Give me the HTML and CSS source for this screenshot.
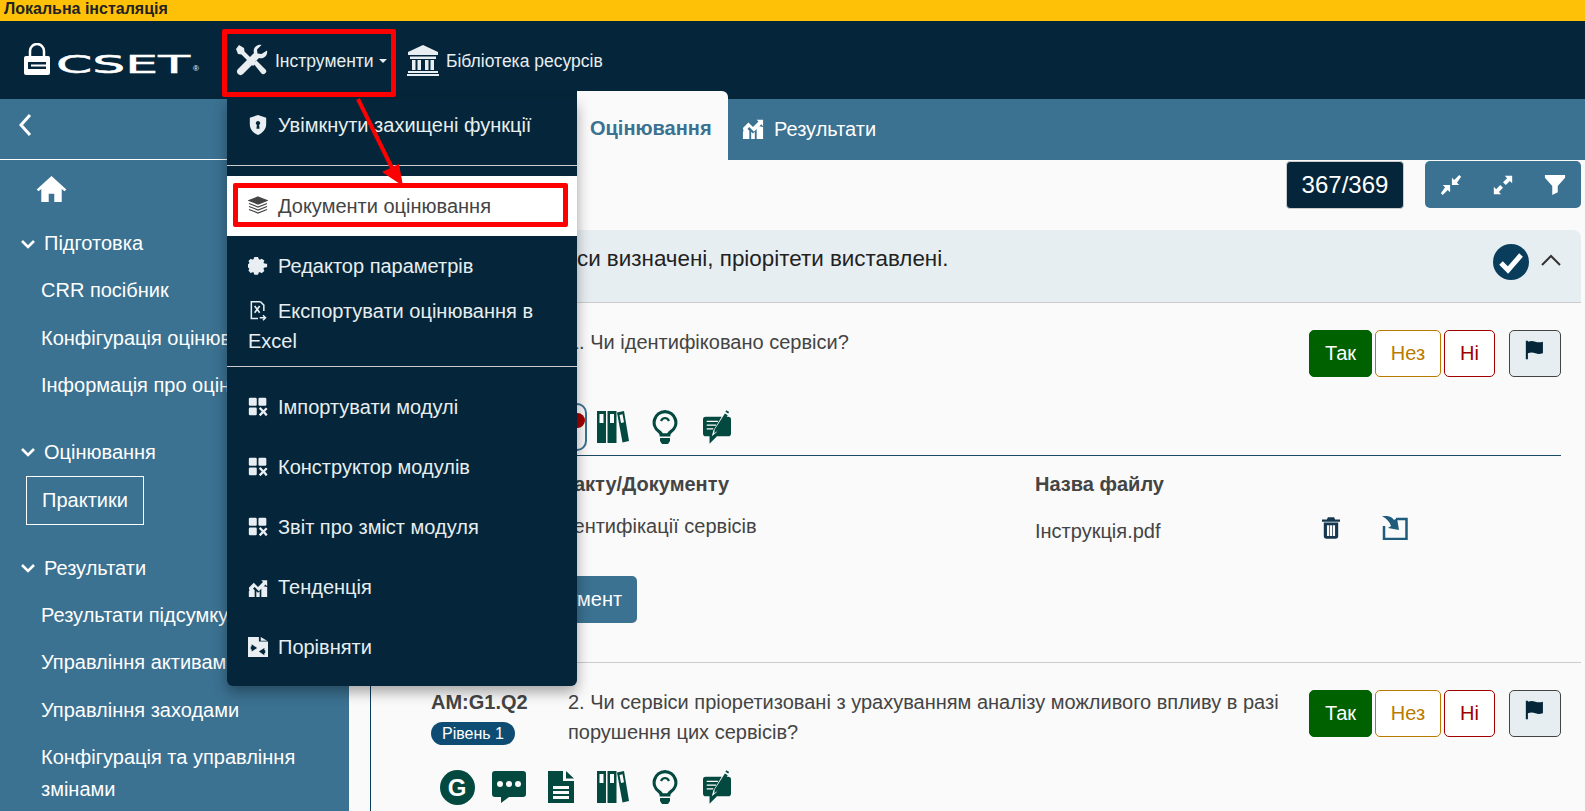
FILE: index.html
```html
<!DOCTYPE html>
<html lang="uk">

<head>
	<meta charset="utf-8">
	<title>CSET</title>
	<link rel="stylesheet" href="styles.css">
</head>

<body>
	<svg class="defs" aria-hidden="true">
		<symbol id="i-modules" viewBox="0 0 24 24">
			<rect x="1" y="1" width="9.5" height="9.5" rx="1.5" />
			<rect x="12.5" y="1" width="9.5" height="9.5" rx="1.5" />
			<rect x="1" y="12.5" width="9.5" height="9.5" rx="1.500" />
			<path d="M13 14l2-2 3.500 3.500 3-3 2 2-3 3 3 3.500-2 2-3-3.500-3.500 3.500-2-2 3.500-3.500z" />
		</symbol>
		<symbol id="i-comment" viewBox="0 0 34 32">
			<path fill-rule="evenodd" d="M3 0h28a3 3 0 0 1 3 3v20a3 3 0 0 1-3 3H17l-8 6v-6H3a3 3 0 0 1-3-3V3a3 3 0 0 1 3-3zM8 10a3 3 0 1 0 0 6 3 3 0 0 0 0-6zm9 0a3 3 0 1 0 0 6 3 3 0 0 0 0-6zm9 0a3 3 0 1 0 0 6 3 3 0 0 0 0-6z" />
		</symbol>
		<symbol id="i-file" viewBox="0 0 26 32">
			<path fill-rule="evenodd" d="M0 0h15v10h11v22H0zM18 0l8 7.500h-8zM5 15v3h16v-3zM5 20v3h16v-3zM5 25v3h16v-3z" />
		</symbol>
		<symbol id="i-books" viewBox="0 0 32 32">
			<path fill-rule="evenodd" d="M0 0h9v32H0zM2.500 3v9h4V3zM10.500 0h9v32h-9zM13 3v9h4V3z" />
			<path fill-rule="evenodd" d="M20 1.500l7-1.500L32 30l-6.500 1.500zM22.500 4l1.500 8 3-.7-1.500-8z" />
		</symbol>
		<symbol id="i-bulb" viewBox="0 0 26 34">
			<path fill-rule="evenodd" d="M13 0a12.500 12.500 0 0 1 7 22.800c-1.200 1-1.700 2-1.700 3.700H7.700c0-1.700-.5-2.700-1.700-3.700A12.500 12.500 0 0 1 13 0zm0 3.200a9.300 9.300 0 0 0-5 17.100c1.400 1 2.300 2 2.800 3h4.400c.5-1 1.400-2 2.800-3a9.300 9.300 0 0 0-5-17.100z" />
			<path d="M8 28h10v3l-2 3h-6l-2-3zM8 10.500c1-2.500 3-3.500 5-3.500s4 1 5 3.500l-2 1c-.7-1.600-1.800-2.200-3-2.200s-2.300.6-3 2.200z" />
		</symbol>
		<symbol id="i-pen" viewBox="0 0 30 36">
			<path d="M3 7h17l-9 15-1.500 6 5-4.500L23 7h4a3 3 0 0 1 3 3v15a3 3 0 0 1-3 3H15l-8 8v-8H3a3 3 0 0 1-3-3V10a3 3 0 0 1 3-3z" />
			<path d="M25 0l3 1.800-1 1.700-3-1.800zM23.500 3.500l3 1.800-11 17-3.500 2.500.5-4z" />
			<path class="pen-lines" d="M4 12h12M4 16h10M4 20h7" />
		</symbol>
	</svg>

	<div class="banner">Локальна інсталяція</div>

	<header class="topbar">
		<div class="logo">
			<svg class="logo-lock" viewBox="0 0 26 32">
				<path d="M6 14V8a7 7 0 0 1 14 0v6" fill="none" stroke="#fff" stroke-width="2.500" />
				<path fill="#fff" fill-rule="evenodd" d="M2 13h22a2 2 0 0 1 2 2v15a2 2 0 0 1-2 2H2a2 2 0 0 1-2-2V15a2 2 0 0 1 2-2zm2 6v7h18v-2.500H7v-2h15V19z" />
			</svg>
			<span class="logo-text">CSET</span>
			<span class="logo-reg">®</span>
		</div>
		<a class="nav-link nav-tools">
			<svg class="nav-icon" viewBox="0 0 32 32" fill="#e8eef1">
				<path d="M3 1l5 3 .5 3.500L20 19l-3 3L5.500 10.500 2 10 0 5z" />
				<path d="M17.500 19.500l3-3 9 9c1 1 1 2.500 0 3.500l-.5.500c-1 1-2.500 1-3.500 0z" />
				<path d="M31 6.500c.8 3-1 6.500-4 7.500-1.500.5-3 .3-4 0L7 30c-1.500 1.500-3.500 1.500-5 0s-1.500-3.500 0-5L18 9c-.3-1-.5-2.500 0-4 1-3 4.500-4.800 7.500-4l-4.500 4.500.5 4 4 .5z" />
			</svg>
			Інструменти <i class="caret"></i>
		</a>
		<a class="nav-link">
			<svg class="nav-icon" viewBox="0 0 32 32" fill="#e8eef1">
				<path d="M16 1L31 8v3H1V8zM3 12.500h26V15H3zM1 27h30v2H1zM0 30h32v2H0zM5 16h3.500v10H5zM10.500 16H14v10h-3.500zM18 16h3.500v10H18zM23.500 16H27v10h-3.500z" />
			</svg>
			Бібліотека ресурсів
		</a>
	</header>

	<div class="layout">
		<nav class="sidebar">
			<div class="side-top">
				<svg class="back" viewBox="0 0 14 24" fill="none" stroke="#fff" stroke-width="3">
					<path d="M12 2L3 12l9 10" />
				</svg>
			</div>
			<div class="side-home">
				<svg viewBox="0 0 32 28" fill="#fff">
					<path d="M16 0l16 14.500-2 2L27 14v14h-8v-9h-6v9H5V14l-3 2.500-2-2z" />
				</svg>
			</div>
			<div class="side-head"><svg class="chev" viewBox="0 0 16 10"><path d="M2 2l6 6 6-6" /></svg>Підготовка</div>
			<div class="side-item">CRR посібник</div>
			<div class="side-item">Конфігурація оцінювання</div>
			<div class="side-item">Інформація про оцінювання</div>
			<div class="side-head gap"><svg class="chev" viewBox="0 0 16 10"><path d="M2 2l6 6 6-6" /></svg>Оцінювання</div>
			<div class="side-active">Практики</div>
			<div class="side-head gap"><svg class="chev" viewBox="0 0 16 10"><path d="M2 2l6 6 6-6" /></svg>Результати</div>
			<div class="side-item">Результати підсумку</div>
			<div class="side-item">Управління активами</div>
			<div class="side-item">Управління заходами</div>
			<div class="side-item wrap">Конфігурація та управління змінами</div>
		</nav>

		<main class="main">
			<div class="tabs">
				<div class="tab active">Оцінювання</div>
				<div class="tab">
					<svg class="tab-icon" viewBox="0 0 24 24" fill="#fff">
						<path d="M1 16l4-4 3 3v9H1zM10 16l2 2 2-2v8h-4zM16 13l3-3 4 1v13h-7zM1 12l6-6 5 5 6-6-2-2h7v7l-2-2-8 8-5-5-6 6z" />
					</svg>
					Результати
				</div>
			</div>

			<div class="toolbar">
				<div class="counter">367/369</div>
				<div class="tool-group">
					<span class="tool-btn">
						<svg viewBox="0 0 24 24" fill="#fff"><path d="M23 3l-2-2-5.500 5.500L13 4v8h8l-2.500-2.500zM1 21l2 2 5.500-5.500L11 20v-8H3l2.500 2.500z" /></svg>
					</span>
					<span class="tool-btn">
						<svg viewBox="0 0 24 24" fill="#fff"><path d="M14 2h8v8l-2.500-2.500L15 12l-3-3 4.500-4.500zM10 22H2v-8l2.500 2.500L9 12l3 3-4.500 4.500z" /></svg>
					</span>
					<span class="tool-btn">
						<svg viewBox="0 0 24 24" fill="#fff"><path d="M1 1h22v3l-8 9v7l-6 3V13L1 4z" /></svg>
					</span>
				</div>
			</div>

			<section class="group">
				<div class="group-head">
					<div class="group-title">Сервіси визначені, пріорітети виставлені.</div>
					<svg class="check" viewBox="0 0 36 36">
						<circle cx="18" cy="18" r="18" fill="#0a3d5c" />
						<path d="M8 19l7 7L28 11" fill="none" stroke="#fff" stroke-width="5" />
					</svg>
					<svg class="collapse" viewBox="0 0 22 14" fill="none" stroke="#333" stroke-width="2">
						<path d="M2 12l9-9 9 9" />
					</svg>
				</div>

				<article class="question">
					<div class="q-top">
						<div class="q-id">
							<b>AM:G1.Q1</b>
							<span class="level">Рівень 1</span>
						</div>
						<div class="q-text">1. Чи ідентифіковано сервіси?</div>
						<div class="answers">
							<span class="ans yes">Так</span>
							<span class="ans na">Нез</span>
							<span class="ans no">Ні</span>
							<span class="ans flag">
								<svg viewBox="0 0 24 24"><path fill="#052538" d="M1 1h2.500v1c4-1.500 6-1 9 0s5 1 9 0v14c-4 1-6 1-9 0s-5-1.500-9 0v7H1z" /></svg>
							</span>
						</div>
					</div>
					<div class="q-icons">
						<span class="q-icon"><span class="g">G</span></span>
						<span class="q-icon"><svg class="ic-comment"><use href="#i-comment" /></svg></span>
						<span class="q-icon picked"><svg class="ic-file"><use href="#i-file" /></svg><i class="dot"></i></span>
						<span class="q-icon"><svg class="ic-books"><use href="#i-books" /></svg></span>
						<span class="q-icon"><svg class="ic-bulb"><use href="#i-bulb" /></svg></span>
						<span class="q-icon"><svg class="ic-pen"><use href="#i-pen" /></svg></span>
					</div>
					<div class="docs">
						<div class="docs-row docs-head">
							<b>Назва артефакту/Документу</b>
							<b>Назва файлу</b>
						</div>
						<div class="docs-row">
							<span class="doc-name">Інструкція з ідентифікації сервісів</span>
							<span class="file-name">Інструкція.pdf</span>
							<svg class="trash" viewBox="0 0 20 24" fill="#15384f">
								<path fill-rule="evenodd" d="M6.500 0h7l1 2.500H20v2.500H0V2.500h5.500zM2 6h16v15a3 3 0 0 1-3 3H5a3 3 0 0 1-3-3zM5.500 9v12H8V9zm3.300 0v12h2.500V9zm3.300 0v12h2.400V9z" />
							</svg>
							<svg class="export" viewBox="0 0 26 24">
								<path d="M14 3h10.500v20H2V10" fill="none" stroke="#1f5c7c" stroke-width="2.500" />
								<path fill="#1f5c7c" d="M0 0c6-.5 10 .5 12 4l3-2 2 12-11-2 3-2C8 6 5 3 0 0z" />
							</svg>
						</div>
						<div class="add-doc">Додати документ</div>
					</div>
				</article>

				<article class="question second">
					<div class="q-top">
						<div class="q-id">
							<b>AM:G1.Q2</b>
							<span class="level">Рівень 1</span>
						</div>
						<div class="q-text">2. Чи сервіси пріоретизовані з урахуванням аналізу можливого впливу в разі порушення цих сервісів?</div>
						<div class="answers">
							<span class="ans yes">Так</span>
							<span class="ans na">Нез</span>
							<span class="ans no">Ні</span>
							<span class="ans flag">
								<svg viewBox="0 0 24 24"><path fill="#052538" d="M1 1h2.500v1c4-1.500 6-1 9 0s5 1 9 0v14c-4 1-6 1-9 0s-5-1.500-9 0v7H1z" /></svg>
							</span>
						</div>
					</div>
					<div class="q-icons">
						<span class="q-icon"><span class="g">G</span></span>
						<span class="q-icon"><svg class="ic-comment"><use href="#i-comment" /></svg></span>
						<span class="q-icon"><svg class="ic-file"><use href="#i-file" /></svg></span>
						<span class="q-icon"><svg class="ic-books"><use href="#i-books" /></svg></span>
						<span class="q-icon"><svg class="ic-bulb"><use href="#i-bulb" /></svg></span>
						<span class="q-icon"><svg class="ic-pen"><use href="#i-pen" /></svg></span>
					</div>
				</article>
			</section>
		</main>
	</div>

	<div class="menu">
		<div class="menu-item menu-first">
			<svg class="mi" viewBox="0 0 20 22">
				<path fill-rule="evenodd" d="M10 0l9 3v7c0 6-4 10-9 12C5 20 1 16 1 10V3zM10 6.500a2.300 2.300 0 0 0-1.200 4.300L8.300 15h3.400l-.5-4.200A2.300 2.300 0 0 0 10 6.500z" />
			</svg>Увімкнути захищені функції
		</div>
		<hr class="menu-line">
		<div class="menu-item selected">
			<svg class="mi mi-line" viewBox="0 0 20 20" stroke="#444" stroke-width="1.200">
				<path class="mi-solid" d="M10 1l9 3.500-9 3.500-9-3.500z" />
				<path d="M1 7.500l9 3.500 9-3.500M1 10.500l9 3.500 9-3.500M1 13.500l9 3.500 9-3.500" />
			</svg>Документи оцінювання
		</div>
		<div class="menu-item">
			<svg class="mi" viewBox="0 0 22 20">
				<path d="M7 0h4l1 2.500c1 .5 2 .5 3-.5l3 2-1 2.500c1 1 2 1 4 1v4c-2 0-3 0-4 1.500l1 2.500-3 2.500c-1-1-2-1.500-3-1l-1 2.500H7l-1-2.500c-1-.5-2 0-3 1l-2.500-3 1-2c-.5-1-1-1.500-2-1.500V8c1 0 1.500-.5 2-1.500l-1-2L3 2c1 1 2 1 3 .5z" />
			</svg>Редактор параметрів
		</div>
		<div class="menu-item menu-export">
			<svg class="mi mi-line" viewBox="0 0 20 24" stroke="#e8eef1" stroke-width="1.800">
				<path d="M13 1H2v20h8M13 1l4 4v7" />
				<path d="M6 6l6 8M12 6l-6 8" stroke-width="2" />
				<path d="M12 20h7m-3-3l3 3-3 3" />
			</svg>Експортувати оцінювання в Excel
		</div>
		<hr class="menu-line">
		<div class="menu-item"><svg class="mi"><use href="#i-modules" /></svg>Імпортувати модулі</div>
		<div class="menu-item"><svg class="mi"><use href="#i-modules" /></svg>Конструктор модулів</div>
		<div class="menu-item"><svg class="mi"><use href="#i-modules" /></svg>Звіт про зміст модуля</div>
		<div class="menu-item">
			<svg class="mi" viewBox="0 0 24 24">
				<path d="M1 17l4-4 3 3v8H1zM10 17l2 2 2-2v7h-4zM16 14l3-3 4 1v12h-7zM1 13l6-6 5 5 6-6-2-2h7v7l-2-2-8 8-5-5-6 6z" />
			</svg>Тенденція
		</div>
		<div class="menu-item">
			<svg class="mi" viewBox="0 0 22 22">
				<path fill-rule="evenodd" d="M0 0h12v5h10v17H0zM14 0l7 4h-7zM4 8l6 4-6 4v-2.500H3v-3h1zM18 12l-6 4 6 4v-2.500h1v-3h-1z" />
			</svg>Порівняти
		</div>
	</div>

	<div class="mark mark-tools"></div>
	<div class="mark mark-doc"></div>
	<svg class="mark-arrow" viewBox="0 0 60 100">
		<path d="M5 3L42 78" fill="none" stroke="#f00" stroke-width="4" />
		<path d="M50 90L29 76 46 68z" fill="#f00" />
	</svg>
</body>

</html>
```

FILE: styles.css
```css
html,
body {
	margin: 0;
	height: 811px;
	overflow: hidden;
}

body {
	position: relative;
	font-family: "Liberation Sans", Arial, sans-serif;
	font-size: 20px;
	color: #444;
	background: #fafafa;
}

.defs {
	position: absolute;
	width: 0;
	height: 0;
}

.banner {
	height: 21px;
	padding-left: 4px;
	background: #ffc107;
	color: #222;
	font-size: 16px;
	font-weight: bold;
	line-height: 17px;
}

.topbar {
	display: flex;
	align-items: center;
	height: 78px;
	background: #05263a;
	color: #e8eef1;
}

.logo {
	display: flex;
	align-items: flex-end;
	width: 236px;
	height: 32px;
	margin-top: -2px;
	padding-left: 24px;
	box-sizing: border-box;
}

.logo-lock {
	width: 26px;
	height: 32px;
	flex: none;
}

.logo-text {
	display: block;
	margin-left: 6px;
	color: #fff;
	font-family: "DejaVu Sans", sans-serif;
	font-size: 26px;
	line-height: 22px;
	-webkit-text-stroke: .5px #fff;
	transform: scale(2, .98);
	transform-origin: left bottom;
}

.logo-reg {
	margin-left: 70px;
	color: #fff;
	font-size: 8px;
	line-height: 12px;
}

.nav-link {
	display: flex;
	align-items: center;
	gap: 7px;
	padding-top: 2px;
	font-size: 17.500px;
}

.nav-tools {
	width: 171px;
}

.nav-icon {
	width: 32px;
	height: 32px;
	margin-top: -2px;
}

.caret {
	width: 0;
	height: 0;
	margin-left: -2px;
	border: 4px solid transparent;
	border-top-color: #e8eef1;
	border-bottom: 0;
}

.layout {
	display: flex;
	height: 712px;
}

.sidebar {
	width: 349px;
	flex: none;
	background: #3b7191;
	color: #fff;
}

.side-top {
	display: flex;
	align-items: center;
	height: 61px;
	padding: 0 0 8px 18px;
	box-sizing: border-box;
	border-bottom: 1px solid #fff;
}

.back {
	width: 14px;
	height: 24px;
}

.side-home {
	height: 60px;
	padding: 16px 0 0 36px;
	box-sizing: border-box;
}

.side-home svg {
	width: 31px;
	height: 26px;
	display: block;
}

.side-head {
	display: flex;
	align-items: center;
	height: 47px;
	padding-left: 20px;
}

.side-head.gap {
	margin-top: 19px;
}

.chev {
	width: 16px;
	height: 10px;
	margin-right: 8px;
	fill: none;
	stroke: #fff;
	stroke-width: 2.600;
}

.side-item {
	padding-left: 41px;
	line-height: 47.500px;
	white-space: nowrap;
}

.side-item.wrap {
	padding-right: 40px;
	line-height: 32px;
	white-space: normal;
	margin-top: 7px;
}

.side-active {
	width: 116px;
	height: 47px;
	margin: 0 0 20px 26px;
	border: 1px solid #fff;
	line-height: 47px;
	text-align: center;
}

.main {
	flex: 1;
	min-width: 0;
}

.tabs {
	display: flex;
	align-items: flex-end;
	height: 61px;
	padding-left: 228px;
	background: #3b7191;
	color: #fff;
}

.tab {
	display: flex;
	align-items: center;
	gap: 10px;
	height: 61px;
	padding: 0 0 0 14px;
	flex: none;
}

.tab.active {
	width: 151px;
	height: 69px;
	padding: 6px 0 0 13px;
	box-sizing: border-box;
	background: #fafafa;
	border-radius: 0 6px 0 0;
	color: #3b7191;
	font-weight: bold;
}

.tab-icon {
	width: 22px;
	height: 22px;
	margin-top: -4px;
}

.toolbar {
	display: flex;
	justify-content: flex-end;
	gap: 21px;
	height: 70px;
	padding: 1px 4px 0 0;
	box-sizing: border-box;
}

.counter {
	width: 118px;
	height: 48px;
	border: 1px solid #ccc;
	border-radius: 4px;
	box-sizing: border-box;
	background: #05263a;
	color: #fff;
	font-size: 24px;
	line-height: 46px;
	text-align: center;
}

.tool-group {
	display: flex;
	height: 47px;
	background: #3b7191;
	border-radius: 5px;
}

.tool-btn {
	display: flex;
	align-items: center;
	justify-content: center;
	width: 52px;
}

.tool-btn svg {
	width: 22px;
	height: 22px;
}

.group {
	margin: 0 4px 0 21px;
	border-left: 1px solid #0a3d5c;
}

.group-head {
	display: flex;
	align-items: flex-start;
	height: 72px;
	background: #e7eef2;
	border-bottom: 1px solid #ccc;
	border-radius: 0 8px 0 0;
}

.group-title {
	flex: 1;
	padding: 14px 0 0 148px;
	color: #222;
	font-size: 22.400px;
	line-height: 30px;
}

.check {
	width: 36px;
	height: 36px;
	margin: 14px 11px 0 0;
}

.collapse {
	width: 22px;
	height: 14px;
	margin: 23px 19px 0 0;
}

.question {
	padding: 27px 20px 0 60px;
}

.question.second {
	border-top: 1px solid #ccc;
}

.q-top {
	display: flex;
	min-height: 73px;
}

.q-id {
	width: 137px;
	flex: none;
	line-height: 24px;
}

.level {
	display: block;
	width: 84px;
	height: 23px;
	margin-top: 8px;
	background: #0f4c73;
	border-radius: 12px;
	color: #fff;
	font-size: 16px;
	line-height: 23px;
	text-align: center;
}

.q-text {
	flex: 1;
	margin-top: -3px;
	padding-right: 20px;
	line-height: 30px;
}

.answers {
	display: flex;
	gap: 3px;
	flex: none;
	height: 47px;
}

.ans {
	display: flex;
	align-items: center;
	justify-content: center;
	height: 47px;
	border: 1px solid;
	border-radius: 5px;
	box-sizing: border-box;
	background: #fff;
}

.yes {
	width: 63px;
	background: #006100;
	border-color: #006100;
	color: #fff;
}

.na {
	width: 66px;
	border-color: #b97a00;
	color: #b97a00;
}

.no {
	width: 51px;
	border-color: #a00000;
	color: #a00000;
}

.flag {
	width: 52px;
	margin-left: 11px;
	border-color: #444;
	background: #e7eef2;
}

.flag svg {
	width: 20px;
	height: 20px;
	margin-bottom: 8px;
}

.q-icons {
	display: flex;
	align-items: center;
	height: 48px;
}

.q-icon {
	position: relative;
	display: flex;
	align-items: center;
	justify-content: center;
	width: 52px;
	height: 48px;
	box-sizing: border-box;
	fill: #03493f;
}

.g {
	width: 35px;
	height: 35px;
	border-radius: 50%;
	background: #03493f;
	color: #fff;
	font-size: 24px;
	font-weight: bold;
	line-height: 35px;
	text-align: center;
}

.ic-comment {
	width: 34px;
	height: 32px;
}

.ic-file {
	width: 26px;
	height: 32px;
}

.ic-books {
	width: 32px;
	height: 32px;
}

.ic-bulb {
	width: 26px;
	height: 34px;
}

.ic-pen {
	width: 28px;
	height: 34px;
}

.pen-lines {
	fill: none;
	stroke: #fff;
	stroke-width: 1.400;
}

.picked {
	border: 2px solid #3b7191;
	border-radius: 10px;
}

.dot {
	position: absolute;
	top: 8px;
	right: 0;
	width: 15px;
	height: 15px;
	border-radius: 50%;
	background: #a00000;
}

.docs {
	margin-top: 4px;
	border-top: 1px solid #1a4a66;
	height: 206px;
}

.docs-row {
	display: flex;
	align-items: center;
	margin-top: -3px;
	padding-left: 17px;
}

.docs-row>:first-child {
	width: 587px;
	flex: none;
}

.docs-row>.doc-name {
	width: 590px;
	margin-left: -3px;
}

.docs-head {
	height: 57px;
	margin-top: 0;
}

.file-name {
	width: 287px;
	flex: none;
	padding-top: 10px;
}

.trash {
	width: 18px;
	height: 22px;
	margin: 3px 0 0 0;
}

.export {
	width: 26px;
	height: 24px;
	margin: 3px 0 0 42px;
}

.add-doc {
	width: 189px;
	height: 47px;
	margin: 33px 0 0 17px;
	background: #3b7191;
	border-radius: 5px;
	color: #fff;
	line-height: 47px;
	text-align: center;
}

.menu {
	position: absolute;
	top: 99px;
	left: 227px;
	width: 350px;
	height: 587px;
	background: #05263a;
	border-radius: 0 0 6px 6px;
	box-shadow: 0 6px 14px rgba(0, 0, 0, .35);
	color: #e8eef1;
}

.menu-item {
	padding: 15px 21px;
	line-height: 30px;
}

.menu-item.menu-first {
	padding: 11px 21px 25px;
}

.menu-item.menu-export {
	padding: 0 21px 10px;
}

.menu-item.selected {
	background: #fff;
	color: #444;
}

.mi {
	width: 20px;
	height: 20px;
	margin-right: 10px;
	vertical-align: -3px;
	fill: #e8eef1;
}

.mi.mi-line {
	fill: none;
}

.mi-solid {
	fill: #444;
}

.menu-line {
	margin: 0 0 10px;
	border: 0;
	border-top: 1px solid #ccc;
}

.mark {
	position: absolute;
	border: 5px solid #f00;
	box-sizing: border-box;
	border-radius: 2px;
}

.mark-tools {
	top: 29px;
	left: 222px;
	width: 174px;
	height: 68px;
}

.mark-doc {
	top: 183px;
	left: 233px;
	width: 335px;
	height: 44px;
}

.mark-arrow {
	position: absolute;
	top: 96px;
	left: 353px;
	width: 60px;
	height: 100px;
}
```
